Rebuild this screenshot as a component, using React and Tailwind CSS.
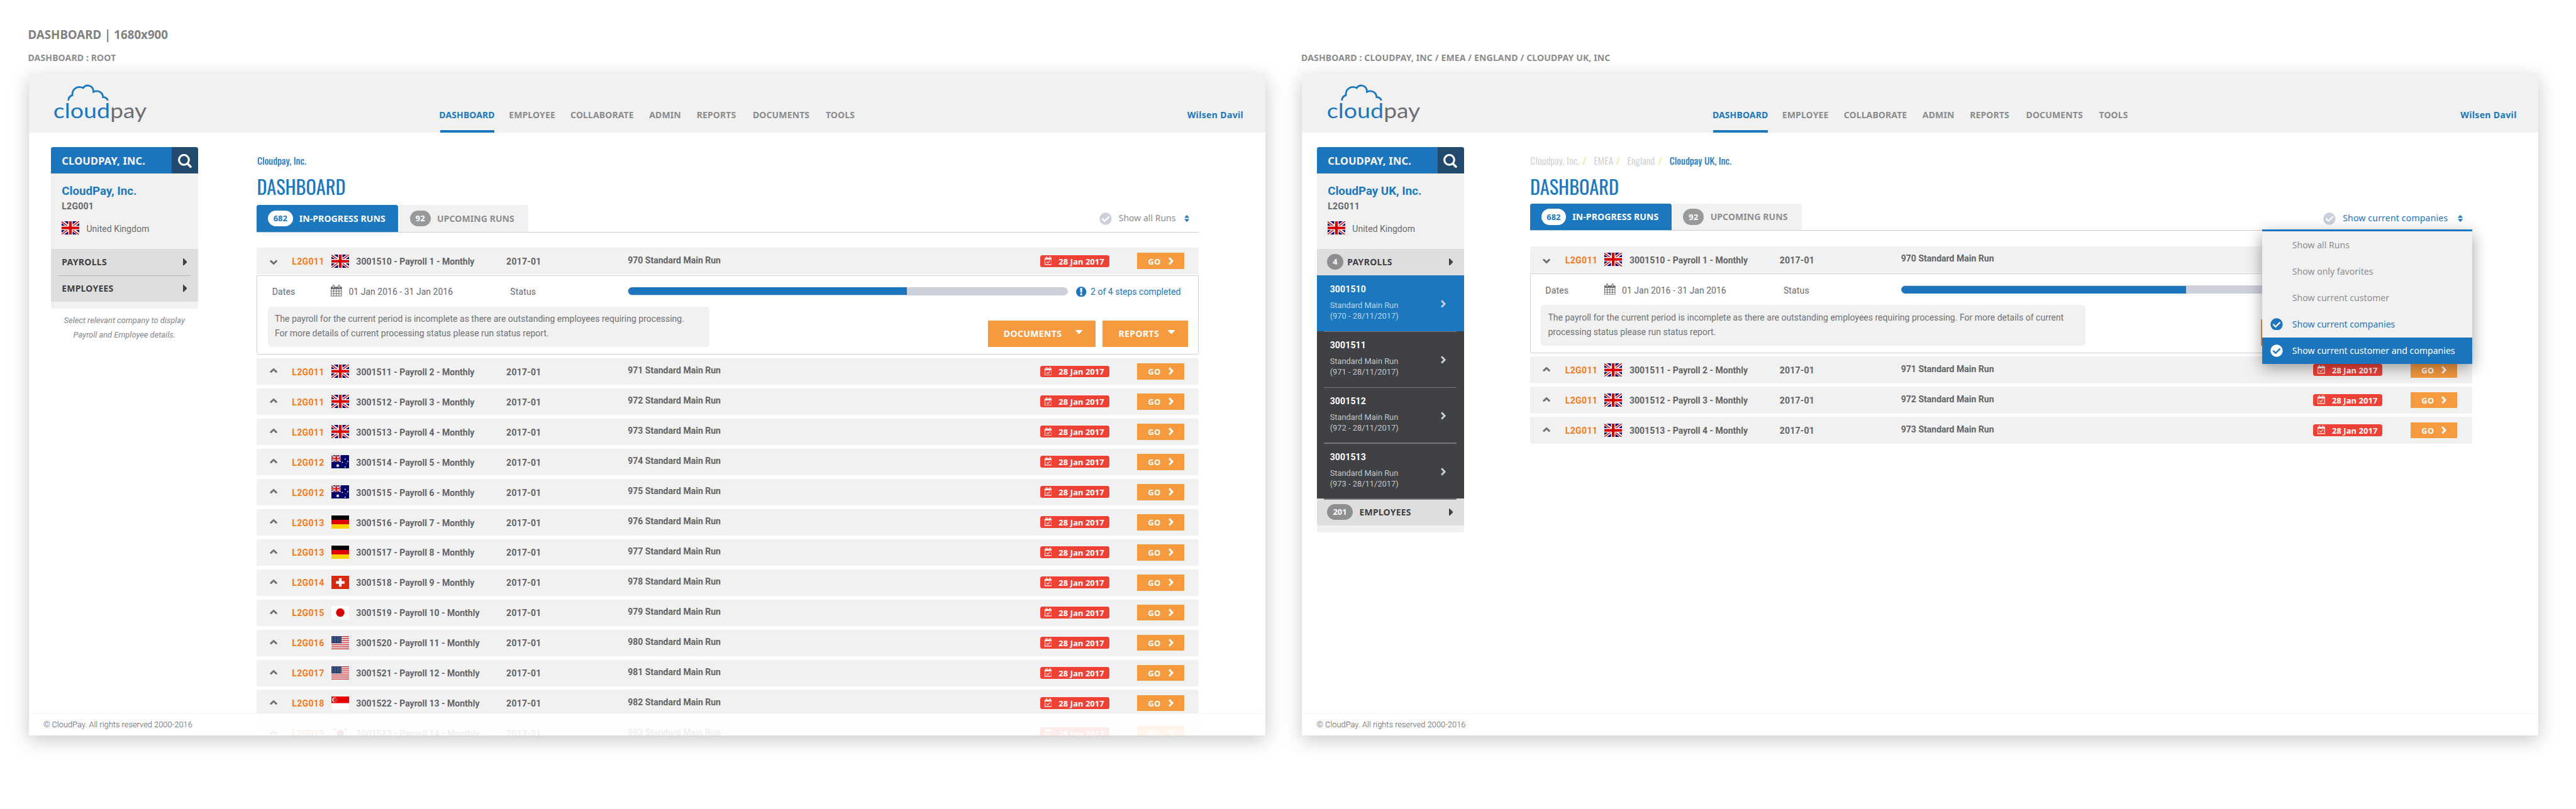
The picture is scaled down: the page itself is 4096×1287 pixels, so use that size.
import React from 'react';
import clsx from 'clsx';
import { FaCheckCircle } from 'react-icons/fa';

/* ---------- flags ---------- */

function UnionJack() {
  return (
    <>
      <rect width="24" height="18" fill="#00006a" />
      <path d="M0 0 24 18M24 0 0 18" stroke="#fff" strokeWidth="4" />
      <path d="M0 0 10 7.5M24 18 14 10.5" stroke="#d80000" strokeWidth="1.3" transform="translate(0 .6)" />
      <path d="M24 0 14 7.5M0 18 10 10.5" stroke="#d80000" strokeWidth="1.3" transform="translate(0 -.2)" />
      <path d="M12 0V18M0 9H24" stroke="#fff" strokeWidth="6" />
      <path d="M12 0V18M0 9H24" stroke="#d80000" strokeWidth="3.6" />
    </>
  );
}

const starRows = [1.2, 2.8, 4.4, 6, 7.6];
const starCols = [1.4, 3.6, 5.8, 8, 10.2, 12.2];

const flagArt = {
  gb: <UnionJack />,
  au: (
    <>
      <rect width="24" height="18" fill="#00006a" />
      <svg width="13" height="9.4" viewBox="0 0 24 18" preserveAspectRatio="none">
        <UnionJack />
      </svg>
      <path d="m8.6 11.7.6 1.5 1.5-.4-.9 1.3 1.2 1-1.6.2.1 1.6-.9-1.3-.9 1.3.1-1.6-1.6-.2 1.2-1-.9-1.3 1.5.4z" fill="#fff" />
      <g fill="#fff">
        <circle cx="18.6" cy="5.6" r=".8" />
        <circle cx="14.8" cy="9.8" r=".8" />
        <circle cx="22.2" cy="8.8" r=".8" />
        <circle cx="18.6" cy="16.2" r=".8" />
        <circle cx="20.2" cy="11.8" r=".5" />
      </g>
    </>
  ),
  de: (
    <>
      <rect width="24" height="6" fill="#000" />
      <rect y="6" width="24" height="6" fill="#e00000" />
      <rect y="12" width="24" height="6" fill="#ffd000" />
    </>
  ),
  ch: (
    <>
      <rect width="24" height="18" fill="#d9290f" />
      <path d="M12 3.2V14.8M6.2 9H17.8" stroke="#fff" strokeWidth="3.6" />
    </>
  ),
  jp: (
    <>
      <rect width="24" height="18" fill="#fff" />
      <circle cx="12" cy="9" r="5.7" fill="#d80000" />
    </>
  ),
  us: (
    <>
      <rect width="24" height="18" fill="#fff" />
      {[0, 1, 2, 3, 4, 5, 6].map((i) => (
        <rect key={i} y={i * 2.77} width="24" height="1.38" fill="#c73c42" />
      ))}
      <rect width="13.6" height="9.7" fill="#223a6c" />
      {starRows.flatMap((y) => starCols.map((x) => <circle key={`${x}-${y}`} cx={x} cy={y} r=".36" fill="#fff" />))}
    </>
  ),
  sg: (
    <>
      <rect width="24" height="18" fill="#fff" />
      <rect width="24" height="9" fill="#e60000" />
      <circle cx="4.4" cy="4.4" r="3.3" fill="#fff" />
      <circle cx="5.7" cy="4.4" r="3" fill="#e60000" />
      <g fill="#fff">
        <circle cx="6" cy="2.4" r=".5" />
        <circle cx="4.4" cy="3.8" r=".5" />
        <circle cx="7.8" cy="3.8" r=".5" />
        <circle cx="5" cy="5.9" r=".5" />
        <circle cx="7.2" cy="5.9" r=".5" />
      </g>
    </>
  ),
  kr: (
    <>
      <rect width="24" height="18" fill="#fff" />
      <path d="M7 9a5 5 0 0 1 10 0c-2 3-4-1-6 0s-3 1.500-4 0z" fill="#d8202c" />
      <path d="M7 9a5 5 0 0 0 10 0c-2 3-4-1-6 0s-3 1.500-4 0z" fill="#1b4a94" />
      <path d="m2 4.500 2-3M3.200 5.300l2-3M4.400 6l2-3M22 4.500l-2-3M20.800 5.300l-2-3M19.600 6l-2-3M2 13.500l2 3M3.200 12.700l2 3M22 13.500l-2 3M20.800 12.700l-2 3" stroke="#222" strokeWidth=".8" />
    </>
  ),
};

function Flag({ code }) {
  return (
    <svg className="h-[18px] w-6 shrink-0 overflow-hidden" viewBox="0 0 24 18">
      {flagArt[code]}
    </svg>
  );
}

/* ---------- icons ---------- */

function Logo() {
  return (
    <svg className="ml-8 mt-3 h-14 w-[134px]" viewBox="32 12 134 56" fill="none">
      <path
        d="M53.9 36.700c.2-3.700 2.300-6.200 5.500-7.300-.6-8.300 7-13.500 14.600-9.700 4.300-6.100 14.200-3.600 14 5.200 6.400-2.800 12.900.7 13.100 7.200 3.100.1 5.700 1.900 6.500 4.600"
        stroke="#1b78bf"
        strokeWidth="2.400"
      />
      <text
        x="33.600"
        y="60.600"
        textLength="77"
        lengthAdjust="spacingAndGlyphs"
        className="fill-[#1b78bf] font-[Lato] text-[28.500px] font-normal"
      >
        cloud
      </text>
      <text
        x="110.800"
        y="60.600"
        textLength="49.500"
        lengthAdjust="spacingAndGlyphs"
        className="fill-[#6d6e71] font-[Lato] text-[28.500px] font-normal"
      >
        pay
      </text>
    </svg>
  );
}

function SearchIcon() {
  return (
    <svg className="h-[19px] w-[19px]" viewBox="0 0 19 19" fill="none" stroke="#fff" strokeLinecap="round">
      <circle cx="8.100" cy="8" r="6.700" strokeWidth="2.700" />
      <path d="m13.200 13.300 3.900 4" strokeWidth="3" />
    </svg>
  );
}

function Chevron({ dir, className }) {
  const turn = { right: '', up: '-rotate-90', down: 'rotate-90' }[dir];
  return (
    <svg className={clsx('h-[11px] w-[7px]', turn, className)} viewBox="0 0 7 11" fill="none" stroke="currentColor">
      <path d="M1 1.100 5.200 5.500 1 9.900" strokeWidth="2.500" />
    </svg>
  );
}

function ArrowRight() {
  return (
    <svg className="h-2.5 w-[5.5px] text-[#3f4043]" viewBox="0 0 5.500 10" fill="currentColor">
      <path d="M0 .7C0 0 .6-.2 1 .3L5.200 4.400c.4.400.4.800 0 1.200L1 9.700C.6 10.200 0 10 0 9.300z" />
    </svg>
  );
}

function Caret() {
  return (
    <svg className="-mt-1 h-[5.5px] w-[9.5px]" viewBox="0 0 9.500 5.500" fill="currentColor">
      <path d="M.7 0h8.100c.6 0 .9.600.4 1L5.300 5.200c-.4.400-.7.400-1.100 0L.3 1C-.2.600.1 0 .7 0z" />
    </svg>
  );
}

function SortIcon() {
  return (
    <svg className="h-[9.500px] w-[7px] text-[#1d75bd]" viewBox="0 0 7 9.500" fill="currentColor">
      <path d="M3.500 0 7 3.900H0zM0 5.600h7L3.500 9.500z" />
    </svg>
  );
}

function CalendarGrid() {
  return (
    <svg className="-mt-[1.6px] h-4 w-[15px]" viewBox="0 0 15 16" fill="none" stroke="#6b6c6f">
      <path d="M0 3.200h15v2.700H0z" fill="#6b6c6f" stroke="none" />
      <path d="M.5 3.200h14v12.200H.5zM.5 8.600h14M.5 12h14M4 6v9M7.500 6v9M11 6v9" strokeWidth=".9" />
      <path d="M3.800 1.500v2.300M11.200 1.500v2.300" strokeWidth="2.800" strokeLinecap="round" />
      <path d="M3.800 1.700v1.900M11.200 1.700v1.900" stroke="#fff" strokeWidth="1.100" strokeLinecap="round" />
    </svg>
  );
}

function CalendarCheck() {
  return (
    <svg className="-mt-px h-[11.500px] w-2.5" viewBox="0 0 10 11.500" fill="none" stroke="#fff">
      <path d="M0 1.900h10v2.300H0z" fill="#fff" stroke="none" />
      <path d="M.45 2.500h9.100V11H.45z" strokeWidth=".9" />
      <path d="M2.700 1v1.700M7.300 1v1.700" strokeWidth="1.900" strokeLinecap="round" />
      <path d="M2.700 1v1.600M7.300 1v1.600" stroke="#f04137" strokeWidth=".6" />
      <path d="m2.700 7.100 1.700 1.700 3-3.300" strokeWidth=".9" />
    </svg>
  );
}

function AlertIcon() {
  return (
    <svg className="mt-[0.5px] h-3.5 w-3.5" viewBox="0 0 14 14">
      <circle cx="7" cy="7" r="7" fill="#1d75bd" />
      <path d="M5.500 2h3l-.4 6.100H5.900zM5.700 9.200h2.600v2.500H5.700z" fill="#fff" />
    </svg>
  );
}

/* ---------- page header ---------- */

function Header() {
  const links = ['EMPLOYEE', 'COLLABORATE', 'ADMIN', 'REPORTS', 'DOCUMENTS', 'TOOLS'];
  return (
    <header className="flex h-20 shrink-0 bg-[#f1f1f1] font-['Noto_Sans',sans-serif] text-xs leading-4 font-bold">
      <div className="w-[557.7px]">
        <Logo />
      </div>
      <nav className="grid grid-cols-[94.8px_83.6px_107px_64.4px_76.3px_99.1px_40px] pt-[48.6px] tracking-[0.09px] text-[#8b8c8e]">
        <a className="flex flex-col justify-between text-[#1b78bf]">
          DASHBOARD
          <span className="ml-[1.2px] h-[3px] w-[73.7px] bg-[#1b78bf]" />
        </a>
        {links.map((l) => (
          <a key={l}>{l}</a>
        ))}
      </nav>
      <div className="ml-auto pt-[48.6px] pr-[29.6px] tracking-[0.3px] text-[#1b78bf]">Wilsen Davil</div>
    </header>
  );
}

/* ---------- sidebar ---------- */

function SidebarSection({ label, count, tracking }) {
  return (
    <div className="flex h-9 items-center justify-between bg-[#dedede] pr-[15px] pl-[15px] font-['Noto_Sans',sans-serif] text-xs font-bold text-[#3f4043]">
      <span className="flex items-center">
        {count && (
          <span
            className={clsx(
              '-ml-px flex h-[22px] items-center justify-center rounded-full bg-[#8e8e90] text-[11px] text-white',
              count.length > 1 ? 'mr-[9px] w-[35px]' : 'mr-[5.5px] w-[22px]',
            )}
          >
            {count}
          </span>
        )}
        <span className={clsx('pt-px', tracking)}>{label}</span>
      </span>
      <ArrowRight />
    </div>
  );
}

function PayrollItem({ id, run, active }) {
  return (
    <div
      className={clsx(
        'flex h-[76px] items-center justify-between pr-6 pl-[18px]',
        active ? 'bg-[#1b78bf] text-[#b9d5ec]' : 'bg-[#404145] text-[#c4c5c7]',
      )}
    >
      <div className="text-[11px] leading-[15px]">
        <div className="mb-1.5 text-xs leading-[15px] font-bold tracking-[0.12px] text-white">{id}</div>
        <div>Standard Main Run</div>
        <div>({run} - 28/11/2017)</div>
      </div>
      <Chevron dir="right" className="mt-0.5 text-[#cbd0db]" />
    </div>
  );
}

function Divider({ color }) {
  return <div className={clsx('relative z-10 mx-2.5 -mb-px h-px', color)} />;
}

function Sidebar({ company, code, hint, children, className }) {
  return (
    <aside className={clsx('w-[200px] shrink-0 pt-5', className)}>
      <div className="overflow-hidden rounded-[3px] bg-[#f1f1f1]">
        <div className="flex h-[37px] border-b border-white font-['Noto_Sans',sans-serif]">
          <div className="flex flex-1 items-center bg-[#1d75bd] pt-px pl-[15px] text-sm font-bold tracking-[0.22px] text-white">
            CLOUDPAY, INC.
          </div>
          <div className="flex w-9 items-center justify-center bg-[#214a6d] pt-0.5">
            <SearchIcon />
          </div>
        </div>
        <div className="h-[101px] pt-[13.5px] pl-[15px]">
          <div className="text-base leading-5 font-bold text-[#1b78bf]">{company}</div>
          <div className="mt-[2.5px] text-xs leading-4 font-bold tracking-[0.2px] text-[#66676a]">{code}</div>
          <div className="mt-3 flex h-[18px] items-center gap-[9.5px] text-xs leading-4 text-[#6b6c6f]">
            <Flag code="gb" />
            <span className="pt-0.5">United Kingdom</span>
          </div>
        </div>
        {children}
        <div className="h-2.5" />
      </div>
      {hint && (
        <p className="mt-[5.5px] text-center text-[11px] leading-5 whitespace-pre-line text-[#86878a] italic">{hint}</p>
      )}
    </aside>
  );
}

/* ---------- runs table ---------- */

function Tabs({ className, children }) {
  return (
    <div
      className={clsx(
        "relative flex h-[37px] gap-px border-b border-[#cacfda] font-['Noto_Sans',sans-serif] text-xs font-bold",
        className,
      )}
    >
      <div className="flex w-48 items-center gap-[8.5px] rounded-t-[3px] bg-[#1b78bf] pl-[15px] tracking-[0.08px] text-white">
        <span className="flex h-[22px] w-[34px] items-center justify-center rounded-full bg-white text-[11px] text-[#1b78bf]">
          682
        </span>
        <span className="pt-px">IN-PROGRESS RUNS</span>
      </div>
      <div className="flex w-44 items-center gap-[9px] rounded-t-[3px] bg-[#f1f1f1] pl-[15px] tracking-[0.05px] text-[#8d8e90]">
        <span className="flex h-[22px] w-7 items-center justify-center rounded-full bg-[#98999b] text-[11px] text-white">
          92
        </span>
        <span className="pt-px">UPCOMING RUNS</span>
      </div>
      {children}
    </div>
  );
}

function Filter({ label, className, labelClass }) {
  return (
    <div className={clsx('ml-auto flex items-center pr-[13px] font-normal', className)}>
      <FaCheckCircle className="mr-[9.5px] h-[17px] w-[17px] text-[#cbd0da]" />
      <span className={labelClass}>{label}</span>
      <SortIcon />
    </div>
  );
}

function FilterMenu() {
  const items = [
    { label: 'Show all Runs' },
    { label: 'Show only favorites' },
    { label: 'Show current customer' },
    { label: 'Show current companies', state: 'checked' },
    { label: 'Show current customer and companies', state: 'hovered' },
  ];
  return (
    <div className="absolute top-[35px] right-0 z-20 w-[285px] border-t-[3px] border-[#1d75bd] bg-[#f1f1f1] text-xs font-normal shadow-[0_6px_20px_rgba(0,0,0,0.38)]">
      {items.map(({ label, state }) => (
        <div
          key={label}
          className={clsx(
            'grid h-9 grid-cols-[29.5px_1fr] items-center pl-[11px]',
            !state && 'text-[#8d8e90]',
            state === 'checked' && 'text-[#1d75bd]',
            state === 'hovered' && 'bg-[#1d75bd] text-white',
          )}
        >
          <span>{state && <FaCheckCircle className="h-[17px] w-[17px]" />}</span>
          <span className="pt-0.5 tracking-[0.02px]">{label}</span>
        </div>
      ))}
    </div>
  );
}

function RunRow({ code, flag, payroll, run, open }) {
  return (
    <div
      className={clsx(
        'grid h-9 shrink-0 grid-cols-[30.7px_53.3px_34px_204px_165px_560px_132px_64px] items-center bg-[#f1f1f1] pl-[17px] text-xs leading-4 font-bold text-[#636467]',
        open ? 'rounded-t-[3px]' : 'rounded-[3px]',
      )}
    >
      <Chevron dir={open ? 'down' : 'up'} className={clsx('ml-0.5 text-[#6f7073]', open ? 'mt-1' : '-mt-0.5')} />
      <span className="pt-0.5 tracking-[0.3px] text-[#f47b20]">{code}</span>
      <Flag code={flag} />
      <span className="pt-0.5">{payroll}</span>
      <span className="pt-0.5 tracking-[0.2px]">2017-01</span>
      <span className="pb-0.5">{run} Standard Main Run</span>
      <span className="flex h-4 w-[94px] items-center rounded-[3px] bg-[#f04137] pl-1.5 font-['Noto_Sans',sans-serif] text-[11px] tracking-[0.1px] text-white">
        <CalendarCheck />
        <span className="ml-[9.500px] pt-px">28 Jan 2017</span>
      </span>
      <span className="flex h-[22px] items-center justify-between bg-[#f59a3f] pr-[14.5px] pl-[15px] font-['Noto_Sans',sans-serif] text-[11px] tracking-[0.4px] text-white">
        <span className="pt-px">GO</span>
        <Chevron dir="right" />
      </span>
    </div>
  );
}

function ActionButton({ children, className }) {
  return (
    <div
      className={clsx(
        "flex h-9 items-center justify-between bg-[#f59a3f] pl-[21.5px] font-['Noto_Sans',sans-serif] text-xs font-bold text-white",
        className,
      )}
    >
      {children}
      <Caret />
    </div>
  );
}

function RunDetails({ message, fill, messageWidth }) {
  return (
    <div className="mt-px h-[108px] shrink-0 rounded-b-[3px] border border-[#cacfda] text-xs text-[#68696c]">
      <div className="mt-3.5 grid h-4 grid-cols-[80px_24px_219.5px_159.5px_609.5px_19.5px_1fr] items-start pl-5 leading-4">
        <span className="tracking-[0.1px]">Dates</span>
        <CalendarGrid />
        <span>01 Jan 2016 - 31 Jan 2016</span>
        <span className="tracking-[0.1px]">Status</span>
        <div className="mt-[1.5px] h-[11px] w-[598.5px] overflow-hidden rounded-full bg-[#cbd0da] py-[0.5px] pl-[0.5px]">
          <div className={clsx('h-full rounded-l-full bg-[#1d75bd]', fill)} />
        </div>
        <AlertIcon />
        <span className="whitespace-nowrap text-[#1d75bd]">2 of 4 steps completed</span>
      </div>
      <div className="mt-3 flex items-end gap-2.5 pr-3.5 pl-3.5">
        <div
          className={clsx(
            'mr-auto h-[55px] rounded-[4px] bg-[#f1f1f1] pt-[7px] pl-[9.5px] leading-5 whitespace-nowrap text-[#707174]',
            messageWidth,
          )}
        >
          {message.map((line) => (
            <p key={line}>{line}</p>
          ))}
        </div>
        <ActionButton className="w-[146px] pr-[17.500px] tracking-[0.3px]">DOCUMENTS</ActionButton>
        <ActionButton className="w-[116px] pr-[17.500px] tracking-[0.35px]">REPORTS</ActionButton>
      </div>
    </div>
  );
}

/* ---------- artboards ---------- */

function Artboard({ caption, children }) {
  return (
    <section>
      <h2 className="-ml-px h-[29px] font-['Noto_Sans',sans-serif] text-xs leading-4 font-bold tracking-[0.11px] text-[#8b8c8e]">
        {caption}
      </h2>
      <div className="relative flex h-[900px] w-[1680px] flex-col overflow-hidden bg-white shadow-[0_7px_24px_rgba(0,0,0,0.22)]">
        <Header />
        <div className="flex min-h-0 flex-1">{children}</div>
        <footer className="absolute inset-x-0 bottom-0 z-30 flex h-[30px] items-center border-t border-[#f8f8f8] bg-white/90 pb-px pl-5 text-[11px] font-light text-[#58595b]">
          © CloudPay. All rights reserved 2000-2016
        </footer>
      </div>
    </section>
  );
}

function Breadcrumb({ trail, current }) {
  return (
    <div className="flex h-5 pl-[0.5px] font-['Oswald','Roboto_Condensed',sans-serif] text-[13.400px] leading-5 font-normal text-[#1b78bf]">
      {trail.map(({ label, width }) => (
        <span key={label} className={clsx('flex justify-between pr-2.5 font-light tracking-[0.3px] text-[#c6c7c9]', width)}>
          {label}
          <span className="text-[#ffd85c]">/</span>
        </span>
      ))}
      {current}
    </div>
  );
}

function PageTitle() {
  return (
    <h1 className="mt-[7.5px] h-9 font-['Oswald','Roboto_Condensed',sans-serif] text-[26px] leading-9 font-normal text-[#1b78bf]">
      DASHBOARD
    </h1>
  );
}

const rootRuns = [
  ['L2G011', 'gb'], ['L2G011', 'gb'], ['L2G011', 'gb'], ['L2G012', 'au'], ['L2G012', 'au'],
  ['L2G013', 'de'], ['L2G013', 'de'], ['L2G014', 'ch'], ['L2G015', 'jp'], ['L2G016', 'us'],
  ['L2G017', 'us'], ['L2G018', 'sg'], ['L2G019', 'kr'],
].map(([code, flag], i) => ({
  code,
  flag,
  payroll: `${3001511 + i} - Payroll ${i + 2} - Monthly`,
  run: 971 + i,
}));

const firstRun = { code: 'L2G011', flag: 'gb', payroll: '3001510 - Payroll 1 - Monthly', run: 970 };

function RunList({ runs }) {
  return (
    <div className="mt-[5px] flex flex-col gap-[5px]">
      {runs.map((r) => (
        <RunRow key={r.run} {...r} />
      ))}
    </div>
  );
}

function RootDashboard() {
  return (
    <Artboard caption="DASHBOARD : ROOT">
      <Sidebar
        company="CloudPay, Inc."
        code="L2G001"
        className="ml-[30px]"
        hint={'Select relevant company to display\nPayroll and Employee details.'}
      >
        <SidebarSection label="PAYROLLS" tracking="tracking-[0.25px]" />
        <Divider color="bg-[#b4b4b6]" />
        <SidebarSection label="EMPLOYEES" tracking="tracking-[0.15px]" />
      </Sidebar>
      <main className="ml-20 w-[1280px] pt-[28.5px]">
        <Breadcrumb trail={[]} current="Cloudpay, Inc." />
        <PageTitle />
        <Tabs className="mt-[7px]">
          <Filter label="Show all Runs" labelClass="mr-[11.500px]" className="text-[#8d8e90]" />
        </Tabs>
        <div className="mt-[21px]">
          <RunRow {...firstRun} open />
          <RunDetails
            message={[
              'The payroll for the current period is incomplete as there are outstanding employees requiring processing.',
              'For more details of current processing status please run status report.',
            ]}
            messageWidth="w-[600px]"
            fill="w-[379px]"
          />
          <RunList runs={rootRuns} />
        </div>
      </main>
    </Artboard>
  );
}

function CompanyDashboard() {
  return (
    <Artboard caption="DASHBOARD : CLOUDPAY, INC / EMEA / ENGLAND / CLOUDPAY UK, INC">
      <Sidebar company="CloudPay UK, Inc." code="L2G011" className="ml-5">
        <SidebarSection label="PAYROLLS" count="4" tracking="tracking-[0.25px]" />
        {[970, 971, 972, 973].map((run) => (
          <React.Fragment key={run}>
            <PayrollItem id={3000540 + run} run={run} active={run === 970} />
            <Divider color="bg-[#77787b]" />
          </React.Fragment>
        ))}
        <SidebarSection label="EMPLOYEES" count="201" tracking="tracking-[0.15px]" />
      </Sidebar>
      <main className="ml-[90px] w-[1280px] pt-[28.5px]">
        <Breadcrumb
          trail={[
            { label: 'Cloudpay, Inc.', width: 'w-[86px]' },
            { label: 'EMEA', width: 'w-[45.500px]' },
            { label: 'England', width: 'w-[57.500px]' },
          ]}
          current="Cloudpay UK, Inc."
        />
        <PageTitle />
        <Tabs className="mt-[5px]">
          <Filter
            label="Show current companies"
            labelClass="mr-[13px] tracking-[0.16px]"
            className="mt-1 text-[#1d75bd]"
          />
          <FilterMenu />
        </Tabs>
        <div className="mt-[21px]">
          <RunRow {...firstRun} open />
          <RunDetails
            message={[
              'The payroll for the current period is incomplete as there are outstanding employees requiring processing. For more details of current',
              'processing status please run status report.',
            ]}
            messageWidth="w-[740px]"
            fill="w-[387px]"
          />
          <RunList runs={rootRuns.slice(0, 3)} />
        </div>
      </main>
    </Artboard>
  );
}

export default function App() {
  return (
    <div className="h-[1287px] w-[4096px] overflow-hidden bg-white">
      <div className="h-[1100px] w-[3500px] pt-[35px] pl-[39px] font-['Roboto',sans-serif] [zoom:1.170286]">
        <h1 className="-ml-px h-9 font-['Noto_Sans',sans-serif] text-base leading-6 font-bold text-[#808183]">
          DASHBOARD | 1680x900
        </h1>
        <div className="flex gap-[50px]">
          <RootDashboard />
          <CompanyDashboard />
        </div>
      </div>
    </div>
  );
}
